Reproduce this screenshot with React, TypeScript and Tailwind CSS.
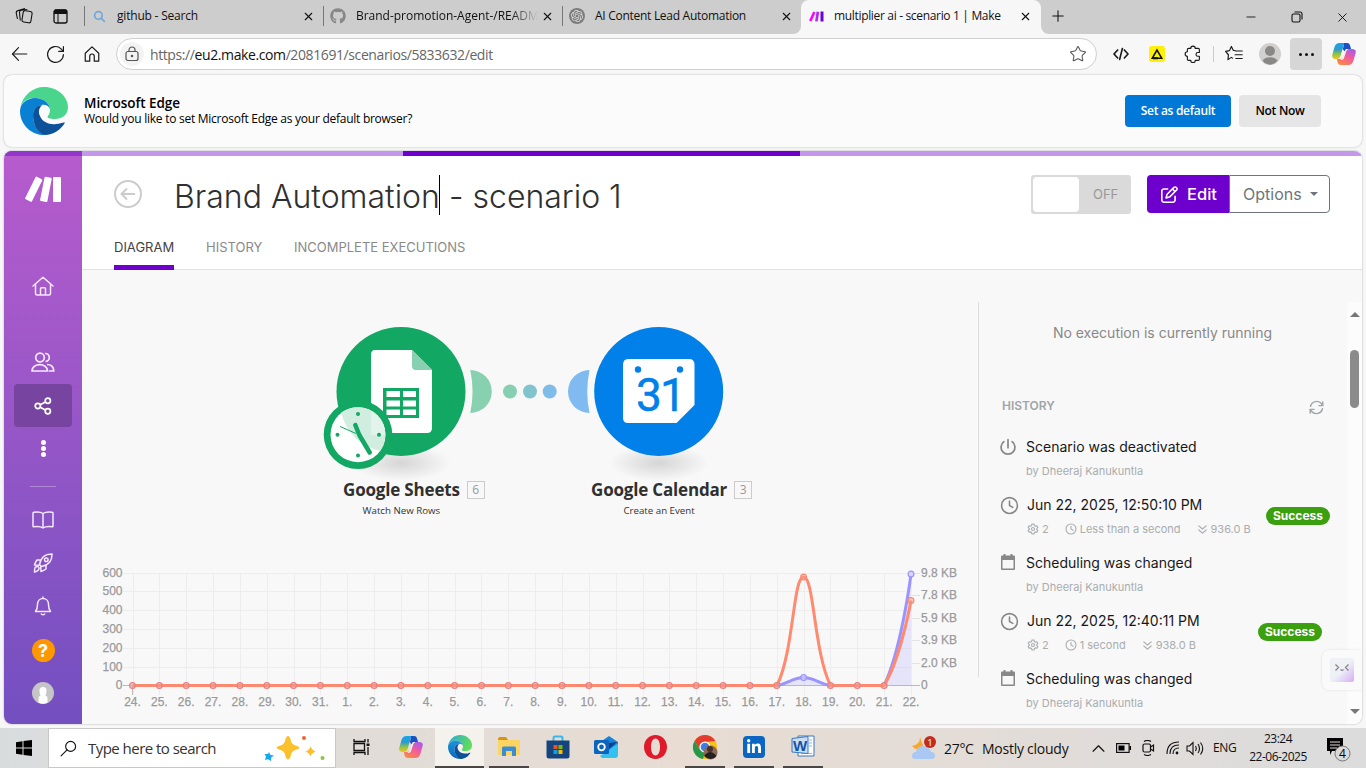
import React from "react";
import { Star, X, Plus, Minus } from "lucide-react";
import { FaGithub, FaLinkedinIn, FaRegPenToSquare } from "react-icons/fa6";
import { SiOpenai } from "react-icons/si";

const days = Array.from({ length: 30 }, (_, i) => (i < 8 ? 24 + i : i - 7));
const px = (i: number) => 50.5 + i * 26.845;

function EdgeLogo({ size, bright }: { size: number; bright?: boolean }) {
  const id = bright ? "eb" : "ea";
  return (
    <svg width={size} height={size} viewBox="0 0 48 48">
      <defs>
        <linearGradient id={id + "g"} x1="0" y1="0" x2="1" y2="0.4">
          <stop offset="0" stopColor={bright ? "#2aa9dc" : "#49d58c"} />
          <stop offset="1" stopColor={bright ? "#5fdc58" : "#49d58c"} />
        </linearGradient>
        <linearGradient id={id + "b"} x1="0" y1="0" x2="0" y2="1">
          <stop offset="0" stopColor={bright ? "#1b95da" : "#0a80d3"} />
          <stop offset="1" stopColor={bright ? "#0b66bd" : "#0a80d3"} />
        </linearGradient>
      </defs>
      <path fill={`url(#${id}g)`} d="M.5 20C3 8 13 0 24 0c14 0 24 10 24 20 0 8-6 12-13 12-5 0-8-1-7.5-2.500C30 27 30 24 30 22c-1-7-8-11-15-11C8 11 3 14 .5 20Z" />
      <path fill={`url(#${id}b)`} d="M0 24C0 16 8 11 15 11c8 0 14.500 5 15 11-1-3-4-4.500-7-4.300C17 18 13 22 13 28c0 10 5 18 13 20C12 49 0 38 0 24Z" />
      <path fill="#0d5299" d="M13 28c0-6 4-10 9-10-3 3-4 7-2 11 2 6 10 9 16 8 4 0 7-2 9-1.500C41 43 33 48 25 48 17 46 13 37 13 28Z" />
    </svg>
  );
}

function Copilot({ id }: { id: string }) {
  return (
    <svg width="24" height="22" viewBox="0 0 24 22">
      <defs>
        <linearGradient id={id + "1"} x1="0" y1="0" x2="0" y2="1">
          <stop offset="0" stopColor="#19a3f0" /><stop offset=".4" stopColor="#2f9bc8" /><stop offset=".7" stopColor="#8fc544" /><stop offset="1" stopColor="#f4c51c" />
        </linearGradient>
        <linearGradient id={id + "2"} x1=".8" y1="0" x2=".2" y2="1">
          <stop offset="0" stopColor="#a85ce8" /><stop offset=".45" stopColor="#ef5ca0" /><stop offset="1" stopColor="#ff8a3c" />
        </linearGradient>
      </defs>
      <path fill={`url(#${id}2)`} d="M17 6h3c3 0 4.500 1.500 3.500 4.500l-2 7c-1 3-2.500 4.500-5 4.500H9c-2 0-3-1-3.500-3L5 16h3c2 0 3-1 3.500-3l1.500-4.500C13.500 7 15 6 17 6Z" />
      <path fill={`url(#${id}1)`} d="M7.500 0H15c-2 0-3 1-3.500 3L8.500 13c-.6 2-1.500 3-3.500 3H4c-3 0-4.500-1.500-3.500-5l2-7C3.300 1.500 5 0 7.500 0Z" />
      <path fill="#1b4fc4" d="M12 0h3c2 0 2.700 1 3.200 3L19 6h-3c-1.800 0-3 1-3.500 2.500L10.800 6 12 2Z" />
      <path fill="#f7f3ef" d="M12.500 8.500 14 6h2.500c-1.300.5-2 1.500-2.500 3l-2 6c-.6 1.500-1.500 2-3 2H8c1.500-.5 2.300-1.500 2.800-3Z" />
    </svg>
  );
}

const Line = ({ d, size = 24, w = 1.5, className = "" }: { d: string[]; size?: number; w?: number; className?: string }) => (
  <svg width={size} height={size} viewBox="0 0 24 24" fill="none" stroke="currentColor" strokeWidth={w} strokeLinecap="round" strokeLinejoin="round" className={className}>
    {d.map((p) => <path key={p} d={p} />)}
  </svg>
);

const clock = ["M12 2a10 10 0 1 0 0 20 10 10 0 0 0 0-20", "M12 6.500V12l4.200 2.300"];

function TabStrip() {
  return (
    <div className="flex h-[34px] shrink-0 bg-[#f7f7f7] text-[12px] tracking-[-0.28px] text-[#111]">
      <div className="flex w-[801px] items-center rounded-br-lg bg-[#cdcdcd] pb-0.5">
        <svg width="18" height="18" viewBox="0 0 18 18" fill="none" stroke="#111" strokeWidth="1.100" className="ml-[15px]">
          <rect x="7.500" y="4" width="9" height="11.500" rx="2" transform="rotate(9 12 10)" />
          <path d="m5.300 13.500-.8-8c-.1-1.200.5-2 1.800-2.200l6-.8M2.500 12 1.300 6.300C1 5 1.600 4 3 3.600l7-2.100" />
        </svg>
        <svg width="15" height="15" viewBox="0 0 15 15" className="ml-5">
          <rect x="1" y="1" width="13" height="13" rx="2" fill="none" stroke="#111" strokeWidth="1.300" />
          <path d="M1 2a1.500 1.500 0 0 1 1.500-1.500h10A1.500 1.500 0 0 1 14 2v3H1Z" fill="#111" /><path d="M5 5v9" stroke="#111" />
        </svg>
        <i className="ml-4 h-5 w-px bg-[#777]" />
        <Line d={["M10 3a7 7 0 1 0 0 14 7 7 0 0 0 0-14", "m15 15 6 6"]} size={13} w={3} className="ml-2 text-[#73a7d8]" />
        <span className="ml-[11px] w-[185px] tracking-[-0.2px] whitespace-nowrap">github - Search</span>
        <X size={13} strokeWidth={2} />
        <i className="ml-[8px] h-5 w-px bg-[#777]" />
        <FaGithub size={16} className="ml-[6px] text-[#888]" />
        <span className="ml-[10px] w-[182px] whitespace-nowrap tracking-[-0.02px] [mask-image:linear-gradient(to_right,#000_85%,transparent)]">Brand-promotion-Agent-/READM</span>
        <X size={13} strokeWidth={2} className="ml-[3px]" />
        <i className="ml-2 h-5 w-px bg-[#777]" />
        <span className="ml-[6px] flex size-4 items-center justify-center rounded-full bg-[#7d7d7d] text-[#ddd]"><SiOpenai size={12} /></span>
        <span className="ml-[10px] w-[184px] whitespace-nowrap">AI Content Lead Automation</span>
        <X size={13} strokeWidth={2} className="ml-px" />
      </div>
      <div className="w-[240px] bg-[#cdcdcd]">
        <div className="flex h-full items-center rounded-t-lg bg-[#f7f7f7] pb-0.5">
          <svg width="15" height="11" viewBox="0 0 15 11" className="ml-2"><path d="M4.200.5 6.500 1.400 2.500 10.500 0 9.500Z" fill="#f0f" /><path d="m7.500.5 2.700.4-1.500 9.600-2.600-.3Z" fill="#b02de9" /><path d="M11.500.5H14.500V10.500h-3Z" fill="#6d00cc" /></svg>
          <span className="ml-[10px] w-[181px] tracking-[-0.33px] whitespace-nowrap">multiplier ai - scenario 1 | Make</span>
          <X size={13} strokeWidth={2} className="ml-[4px]" />
        </div>
      </div>
      <div className="flex flex-1 items-center rounded-bl-lg bg-[#cdcdcd]">
        <Plus size={18} strokeWidth={1.4} className="-mt-0.5 ml-[8px]" />
        <Minus size={14} strokeWidth={1.5} className="ml-[177px]" />
        <svg width="12" height="12" viewBox="0 0 12 12" fill="none" stroke="#111" strokeWidth="1.100" className="ml-[33px]"><rect x="1" y="3" width="8" height="8" rx="1.500" /><path d="M3.500 1H9a2 2 0 0 1 2 2v5.500" /></svg>
        <X size={15} strokeWidth={1.5} className="ml-[32px]" />
      </div>
    </div>
  );
}

function Toolbar() {
  return (
    <div className="flex h-10 shrink-0 items-center text-[#1a1a1a]">
      <Line d={["M21 12H2", "m10 3.500-8 8.500 8 8.500"]} size={18} w={1.5} className="ml-[11px]" />
      <Line d={["M22 12a10 10 0 1 1-3-7.200L22 8", "M22 2v6h-6"]} size={19} w={1.5} className="ml-[17px]" />
      <Line d={["M3 11 12 2.500l9 8.500v10.500h-6V15a3 3 0 0 0-6 0v6.500H3Z"]} size={18} w={1.6} className="ml-[18px]" />
      <div className="ml-[15px] flex h-8 w-[981px] items-center rounded-full border border-[#cfcfcf] bg-white">
        <span className="ml-[3px] flex size-6 items-center justify-center rounded-full bg-[#f3f3f3]">
          <svg width="14" height="16" viewBox="0 0 14 16" fill="none" stroke="#555" strokeWidth="1.200"><rect x="1" y="5.500" width="12" height="9" rx="2" /><path d="M4 5.500V4a3 3 0 0 1 6 0v1.500" /><circle cx="7" cy="10" r=".7" fill="#555" /></svg>
        </span>
        <span className="ml-[6px] flex-1 text-[14px] tracking-[-0.4px] text-[#666]">https://<span className="text-[#111]">eu2.make.com</span>/2081691/scenarios/5833632/edit</span>
        <Star size={18} strokeWidth={1.4} className="mr-[9px] text-[#555]" />
      </div>
      <Line d={["m7 6-5.500 6L7 18", "m17 6 5.500 6-5.500 6", "m14 4-4 16"]} size={16} w={2.5} className="ml-4" />
      <svg width="16" height="16" viewBox="0 0 16 16" className="ml-5"><rect width="16" height="16" rx="2.500" fill="#fff00a" /><path d="M8 4 3.300 12.200H12.700Z" fill="none" stroke="#111" strokeWidth="1.600" /><path d="M4 12.200h5" stroke="#111" strokeWidth="2.200" /></svg>
      <Line d={["M9 4.500a3 3 0 0 1 6 0h4a1.500 1.500 0 0 1 1.500 1.500v4h-2a2.300 2.300 0 0 0 0 5h2v4a1.500 1.500 0 0 1-1.500 1.500h-4a3 3 0 0 1-6 0H6a1.500 1.500 0 0 1-1.500-1.500v-4a3 3 0 0 1 0-6V6A1.500 1.500 0 0 1 6 4.500Z"]} size={18} w={1.5} className="ml-[19px]" />
      <i className="ml-[11px] h-4 w-px bg-[#ccc]" />
      <Line d={["M13.500 7.500 11 7 8.500 2 6 7.500.8 8.500 4.500 13 4 19.500 8.500 16.500 10 17.500", "M14.500 8h8.500M13.500 13h9.500M14.500 18h8.500"]} size={18} w={1.6} className="ml-[11px]" />
      <svg width="22" height="22" viewBox="0 0 22 22" className="ml-[16px]"><circle cx="11" cy="11" r="11" fill="#d2d0ce" /><circle cx="11" cy="8" r="5" fill="#8a8886" /><path d="M3.500 17.500C6 13 16 13 18.500 17.500 15 23 7 23 3.500 17.500Z" fill="#8a8886" /></svg>
      <span className="ml-[9px] flex h-8 w-8 items-center justify-center gap-[3px] rounded bg-[#d6d6d6]">
        <i className="size-[3px] rounded-full bg-[#111]" /><i className="size-[3px] rounded-full bg-[#111]" /><i className="size-[3px] rounded-full bg-[#111]" />
      </span>
      <span className="ml-[10px]"><Copilot id="ca" /></span>
    </div>
  );
}

function Sidebar() {
  return (
    <div className="flex w-[78px] shrink-0 flex-col items-center bg-linear-to-b from-[#b75bcd] to-[#734fc0] text-white">
      <i className="h-[5px] w-full bg-[#9336cb]" />
      <svg width="38" height="28" viewBox="0 0 38 28" fill="#fff" className="mt-5">
        <path d="M11.500 1.200a1 1 0 0 1 1.300-.5l5 2.500a1 1 0 0 1 .4 1.300L8 25.300a1 1 0 0 1-1.300.4l-5-2.500a1 1 0 0 1-.5-1.300Z" />
        <path d="M20.500 1.500a1 1 0 0 1 1.100-.8l5.300 1a1 1 0 0 1 .8 1.200l-4.300 22.300a1 1 0 0 1-1.200.8l-5.300-1a1 1 0 0 1-.8-1.200Z" /><rect x="29" y="1" width="8" height="25" rx="1" />
      </svg>
      <svg width="22" height="20" viewBox="0 0 22 20" fill="none" stroke="#f5e8ff" strokeWidth="1.500" strokeLinecap="round" strokeLinejoin="round" className="mt-[72px]"><path d="M1 10 11 1.200 21 10M3.500 8v9.500q0 1.500 1.500 1.500h12q1.500 0 1.500-1.500V8M8.500 19v-6.500q0-.8.8-.8h3.400q.8 0 .8.800V19" /></svg>
      <svg width="24" height="20" viewBox="0 0 24 20" fill="none" stroke="#f5e8ff" strokeWidth="1.700" strokeLinejoin="round" className="mt-[56px]"><circle cx="9" cy="5.500" r="4.300" /><path d="M14 1.500a4 4 0 1 1 .5 8M1 19c0-8.500 15.500-8.500 15.500 0ZM16 12.500c4 0 6.500 2 6.800 6.500h-5" /></svg>
      <div className="mt-[12px] flex h-[43px] w-[58px] items-center justify-center rounded bg-[#77459f]">
        <svg width="18" height="18" viewBox="0 0 18 18" fill="none" stroke="#fff" strokeWidth="1.700"><circle cx="3.800" cy="9" r="2.600" /><circle cx="13.800" cy="3.800" r="2.600" /><circle cx="13.800" cy="14.200" r="2.600" /><path d="m6.200 7.800 5.200-2.700M6.200 10.200l5.200 2.800" /></svg>
      </div>
      <div className="mt-[13px] flex flex-col gap-[1px]"><i className="size-[5px] rounded-full bg-white" /><i className="size-[5px] rounded-full bg-white" /><i className="size-[5px] rounded-full bg-white" /></div>
      <i className="mt-[29px] h-px w-[26px] bg-white/30" />
      <svg width="22" height="18" viewBox="0 0 22 18" fill="none" stroke="#f5e8ff" strokeWidth="1.500" strokeLinejoin="round" className="mt-[24px]"><path d="M11 2.500C9 1 5 .8 1.800 1.200Q1 1.300 1 2v13q0 .8.800.7C5 15.300 9 15.500 11 17c2-1.500 6-1.700 9.200-1.300q.8.1.8-.7V2q0-.7-.8-.8C17 .8 13 1 11 2.500ZM11 2.500V17" /></svg>
      <svg width="20" height="20" viewBox="0 0 20 20" fill="none" stroke="#f5e8ff" strokeWidth="1.500" strokeLinejoin="round" className="mt-[24px]"><path d="M6.500 11.500C7.500 6 11 .8 19 1c.2 8-5 11.500-10.500 12.500ZM7.800 7H4Q2.500 9 1.500 12l4.800.3M13 12.500V16q-2 1.500-5 2.500l-.3-5M2 14.500Q5.500 12.500 6 15t-4.500 4q0-2.500.5-4.500" /><circle cx="13.300" cy="6.700" r="1.800" /></svg>
      <svg width="18" height="20" viewBox="0 0 18 20" fill="none" stroke="#f5e8ff" strokeWidth="1.500" strokeLinecap="round" strokeLinejoin="round" className="mt-[23px]"><path d="M9 1v1.500M1.500 15.500h15C14.500 13 14.500 11 14.500 8.500c0-8-11-8-11 0 0 2.500 0 4.500-2 7ZM7.300 18q1.700 1.500 3.400 0" /></svg>
      <span className="mt-[23px] flex size-[23px] items-center justify-center rounded-full bg-[#ff9800] font-[Inter] text-[18px] font-bold">?</span>
      <svg width="22" height="22" viewBox="0 0 22 22" className="mt-[20px]"><circle cx="11" cy="11" r="11" fill="#c5c5c5" /><path d="M6.500 20.500V16q0-2 2-2.200Q5.500 5 11 5t2.500 8.800q2 .2 2 2.200v4.500Q11 23 6.500 20.500Z" fill="#fff" /></svg>
    </div>
  );
}

function Header() {
  return (
    <div className="flex h-[114px] shrink-0 flex-col justify-between border-b border-[#e0e0e0] bg-white font-[Inter]">
      <div className="flex items-start pt-[19px] pl-8">
        <svg width="28" height="28" viewBox="0 0 28 28" fill="none" stroke="#ccc" strokeWidth="2" className="mt-[5px]"><circle cx="14" cy="14" r="13" /><path d="M21 14H8M13 8.500 7.500 14l5.500 5.500" /></svg>
        <div className="ml-[32px] flex h-10 w-[857px] items-center whitespace-nowrap text-[32px] font-light text-[#303030]">
          <span className="w-[265px] pt-[3px]">Brand Automation</span><i className="h-10 w-px bg-black" /><span className="ml-[9px] pt-[3px]">- scenario 1</span>
        </div>
        <div className="flex h-[39px] w-[100px] items-center rounded-[3px] bg-[#dadada] p-0.5 text-[13px] text-[#999]">
          <i className="h-[35px] w-[46px] rounded-sm bg-white" /><span className="ml-[14px]">OFF</span>
        </div>
        <div className="ml-4 flex h-[38px]">
          <div className="flex w-[82px] items-center rounded-l-[4px] bg-[#6d00cc] pl-[14px] text-[16.500px] font-medium text-white"><FaRegPenToSquare size={17} /><span className="ml-[9px] pt-px">Edit</span></div>
          <div className="flex w-[101px] items-center rounded-r-[4px] border border-[#6c757d] pl-[13px] text-[16px] text-[#6c757d]">Options<i className="ml-[8px] border-x-[4px] border-t-[4px] border-x-transparent border-t-[#6c757d]" /></div>
        </div>
      </div>
      <div className="ml-8 flex h-[34px] gap-8 text-[13px] whitespace-nowrap text-[#8a8a8a]">
        <div className="-mb-px w-[60px] border-b-[5px] border-[#6d00cc] pt-[3px] text-[#444]">DIAGRAM</div>
        <div className="w-[56px] pt-[3px]">HISTORY</div>
        <div className="pt-[3px]">INCOMPLETE EXECUTIONS</div>
      </div>
    </div>
  );
}

function Diagram() {
  return (
    <svg width="500" height="220" viewBox="310 300 500 220" className="absolute top-[30px] left-[228px]">
      <defs><radialGradient id="sh"><stop offset="0" stopColor="#000" stopOpacity=".14" /><stop offset="1" stopColor="#000" stopOpacity="0" /></radialGradient></defs>
      <ellipse cx="401" cy="463" rx="50" ry="18" fill="url(#sh)" /><ellipse cx="659" cy="463" rx="50" ry="18" fill="url(#sh)" />
      <circle cx="401" cy="391.500" r="64.500" fill="#12a763" /><circle cx="658.700" cy="391.500" r="64.500" fill="#0080e8" />
      <path d="M470.300 370a21.500 21.500 0 0 1 0 43q4.500-21 0-43Z" fill="#88d1b0" /><path d="M589.500 370a21.500 21.500 0 0 0 0 43q-4.500-21 0-43Z" fill="#7fbbf0" />
      <circle cx="510" cy="391.500" r="7" fill="#86cfb2" /><circle cx="530" cy="391.500" r="7" fill="#81c4ce" /><circle cx="549.700" cy="391.500" r="7" fill="#7fbce9" />
      <path d="M375 350h37l20 20v58q0 5-5 5h-52q-4 0-4-5v-73q0-5 4-5Z" fill="#fff" /><path d="m412 350 20 20h-16q-4 0-4-4Z" fill="#88d1b0" />
      <path d="M383 388h36v30h-36Z" fill="#12a763" /><path d="M386.500 391h13.500v6h-13.500ZM403 391h13v6h-13ZM386.500 400.500h13.500v6h-13.500ZM403 400.500h13v6h-13ZM386.500 409.500h13.500v5.500h-13.500ZM403 409.500h13v5.500h-13Z" fill="#fff" />
      <circle cx="358" cy="434.700" r="34.300" fill="#12a763" /><circle cx="358" cy="434.700" r="27.500" fill="#fff" />
      <path d="M341 413a27.500 27.500 0 0 1 39 38q-30-8-39-38Z" fill="#d0ede0" /><path d="M371 411q13 7 14 20v4h-14Z" fill="#f1faf6" opacity=".5" />
      <g fill="#12a763"><circle cx="358" cy="414" r="2" /><circle cx="358" cy="455.500" r="2" /><circle cx="337.500" cy="434.700" r="2" /><circle cx="379" cy="434.700" r="2" /></g>
      <path d="m355.300 425 4 10 10.400 17.500" fill="none" stroke="#12a763" strokeWidth="4.500" strokeLinecap="round" strokeLinejoin="round" /><path d="m340 426.500 16 7" stroke="#12a763" />
      <path d="M628 359h61q5.500 0 5.500 5.500V405l-18 18H628q-5 0-5-5v-53q0-6 5-6Z" fill="#fff" /><circle cx="638" cy="369.500" r="3.200" fill="#0080e8" /><circle cx="680" cy="369.500" r="3.200" fill="#0080e8" />
      <text x="636 660" y="411" fontFamily="Roboto" fontSize="46" stroke="#0080e8" strokeWidth=".5" fill="#0080e8">31</text>
    </svg>
  );
}

function Chart() {
  const ticks: [number, string][] = [[3.5, "600"], [21.5, "500"], [40.5, "400"], [59.5, "300"], [78.5, "200"], [97.5, "100"], [115.5, "0"]];
  const kb: [number, string][] = [[3.5, "9.8 KB"], [25.5, "7.8 KB"], [48.5, "5.9 KB"], [70.5, "3.9 KB"], [93.5, "2.0 KB"], [115.5, "0"]];
  return (
    <svg width="890" height="155" viewBox="0 -10 890 155" className="absolute top-[290px] left-0" fontFamily="Liberation Sans" fontSize="12" fill="#9a9a9a">
      {ticks.map(([y, t]) => <g key={t}><path d={`M41 ${y}H829`} stroke="#ededed" /><text x="40.500" y={y + 3.500} textAnchor="end" stroke="#9a9a9a" strokeWidth=".25">{t}</text></g>)}
      {kb.map(([y, t]) => <g key={t}><path d={`M829 ${y}h9`} stroke="#e3e3e3" /><text x="839" y={y + 3.500} stroke="#9a9a9a" strokeWidth=".25">{t}</text></g>)}
      {days.map((d, i) => <g key={d + "-" + i}><path d={`M${Math.round(px(i)) + 0.5} 3V125`} stroke="#ededed" /><text x={px(i)} y="136" textAnchor="middle" stroke="#9a9a9a" strokeWidth=".25">{d}.</text></g>)}
      <path d="M41 115.500H838M50.500 115v10" stroke="#bbb" fill="none" />
      <path d="M695 115.500C706 114 711 107.500 721.600 107.500S737 114 748.500 115.500ZM802 115.500C820 80 829 4 829 4V115.500Z" fill="#9b94ff" opacity=".2" />
      <path d="M50.500 115.500H695C706 113.800 711 107.500 721.600 107.500S737 113.800 748.500 115.500H802C819.500 79.500 829 4 829 4" fill="none" stroke="#9b94ff" strokeWidth="3" />
      <path d="M50.500 115.500H695C712 80.500 711 7 721.600 7S731.500 80.500 748.500 115.500H802C818.500 89.500 829 30.500 829 30.500" fill="none" stroke="#ff8a70" strokeWidth="3" />
      {days.map((_, i) => <circle key={"r" + i} cx={px(i)} cy={i === 25 ? 7 : i === 29 ? 30.5 : 115.5} r="2.900" fill="#e9a0a0" fillOpacity=".45" stroke={i === 25 || i === 29 ? "#ff8a70" : "#e5817f"} strokeWidth="1.200" />)}
      <circle cx="721.600" cy="107.500" r="2.900" fill="#d8d5ff" fillOpacity=".6" stroke="#9b94ff" strokeWidth="1.200" /><circle cx="829" cy="4" r="2.900" fill="#d8d5ff" stroke="#9b94ff" strokeWidth="1.200" />
    </svg>
  );
}

const PowerIcon = () => <Line d={["M12 2v11", "M6.500 4.800a9.300 9.300 0 1 0 11 0"]} size={18} w={2.3} className="mt-[3px] mr-[9px] -ml-[3px] shrink-0 text-[#888]" />;
const CalIcon = () => <svg width="16" height="17" viewBox="0 0 16 17" className="mt-[3px] mr-[10px] -ml-[2px] shrink-0"><path fillRule="evenodd" d="M3.500 0h2v1.500h5V0h2v1.500H14q1 0 1 1V15q0 1-1 1H2q-1 0-1-1V2.500q0-1 1-1h1.500ZM2.500 6v8.500h11V6Z" fill="#888" /></svg>;

function Note({ icon, title }: { icon: React.ReactNode; title: string }) {
  return (
    <div className="flex h-[58px] items-start">{icon}
      <div className="pt-px"><div className="text-[14px] leading-[22px] text-[#181818]">{title}</div><div className="mt-[3px] text-[11px] leading-5 text-[#a9adb0]">by Dheeraj Kanukuntla</div></div>
    </div>
  );
}

function Run({ title, time, size, wide }: { title: string; time: string; size: string; wide?: boolean }) {
  return (
    <div className="flex h-[58px] items-start">
      <Line d={clock} size={19} w={2} className="mt-[3px] mr-[8px] -ml-[2px] shrink-0 text-[#888]" />
      <div className="pt-px">
        <div className="text-[14px] leading-[22px] text-[#181818]">{title}</div>
        <div className="mt-[3px] flex items-center text-[11px] leading-5 whitespace-nowrap text-[#a9adb0]">
          <Line d={["M10 2h4l.8 3 2 1.200 3-.8 2 3.500-2.200 2.100v2l2.200 2.100-2 3.500-3-.8-2 1.200-.8 3h-4l-.8-3-2-1.200-3 .8-2-3.500L4.400 13v-2L2.200 8.900l2-3.500 3 .8 2-1.200Z", "M12 9a3 3 0 1 0 0 6 3 3 0 0 0 0-6"]} size={12} w={2.2} className="mr-[3px]" />2
          <Line d={clock} size={12} w={2.2} className="mr-[3px] ml-[16px]" />{time}
          <Line d={["m4 4 8 7 8-7", "m4 13 8 7 8-7"]} size={11} w={2.5} className="mr-[3px] ml-[16px]" />{size}
        </div>
      </div>
      <span className={wide ? "mt-[14px] ml-auto flex h-[18px] w-16 items-center justify-center rounded-full bg-[#3ba010] text-[12px] font-bold text-white" : "mt-[14px] mr-2 ml-auto flex h-[18px] w-16 items-center justify-center rounded-full bg-[#3ba010] text-[12px] font-bold text-white"}>Success</span>
    </div>
  );
}

function HistoryPanel() {
  return (
    <div className="mt-[32px] flex h-[422px] w-[384px] font-[Inter]">
      <div className="h-[375px] w-[369px] border-l border-[#ddd]">
        <div className="pt-[21px] pr-px text-center text-[14px] leading-5 text-[#888]">No execution is currently running</div>
        <div className="mt-[53px] flex items-center justify-between pr-[23px] pl-[23px] text-[12px] leading-5 font-semibold text-[#a0a5a8]">HISTORY
          <Line d={["M2.500 10A10 10 0 0 1 20 6l2 2.500", "M22 3v6h-6", "M21.500 14A10 10 0 0 1 4 18l-2-2.500", "M2 21v-6h6"]} size={15} w={2.3} className="mt-0.5" />
        </div>
        <div className="mt-[19px] pr-[17px] pl-[23px]">
          <Note icon={<PowerIcon />} title="Scenario was deactivated" />
          <Run title="Jun 22, 2025, 12:50:10 PM" time="Less than a second" size="936.0 B" wide />
          <Note icon={<CalIcon />} title="Scheduling was changed" />
          <Run title="Jun 22, 2025, 12:40:11 PM" time="1 second" size="938.0 B" />
          <Note icon={<CalIcon />} title="Scheduling was changed" />
        </div>
      </div>
      <div className="flex w-[15px] flex-col items-center justify-between bg-[#fcfcfc] pt-[10px] pb-[10px]">
        <div className="flex flex-col items-center"><i className="border-x-[5px] border-b-[5px] border-x-transparent border-b-[#777]" /><i className="mt-[33px] h-[58px] w-[9px] rounded-full bg-[#8b8b8b]" /></div>
        <i className="border-x-[5px] border-t-[5px] border-x-transparent border-t-[#777]" />
      </div>
    </div>
  );
}

function NodeLabel({ name, sub, n, className }: { name: string; sub: string; n: string; className: string }) {
  return (
    <div className={className}>
      <div className="flex items-center whitespace-nowrap"><span className="text-[17px] leading-5 font-bold tracking-[-0.18px] text-[#303030]">{name}</span><span className="ml-[7px] flex h-[18px] w-[18px] items-center justify-center border border-[#ccc] text-[12px] text-[#999]">{n}</span></div>
      <div className="mt-[3px] mr-[25px] text-center text-[9.700px] leading-4 text-[#333]">{sub}</div>
    </div>
  );
}

function TaskIcon({ children, line, active }: { children: React.ReactNode; line?: boolean; active?: boolean }) {
  return (
    <div className={active ? "flex h-10 w-[49px] flex-col items-center bg-[#f5f1ed]" : "flex h-10 w-[49px] flex-col items-center"}>
      <div className="flex h-[38px] items-center">{children}</div>
      {line && <i className={active ? "h-0.5 w-full bg-[#4a4646]" : "h-0.5 w-10 bg-[#4a4646]"} />}
    </div>
  );
}

function Taskbar() {
  return (
    <div className="mt-1 flex h-10 shrink-0 items-center bg-linear-to-r from-[#d9dcdd] via-[#e8dcd3] to-[#dcdcdd] text-[#111]">
      <div className="flex w-[48px] justify-center"><svg width="16" height="16" viewBox="0 0 16 16"><path d="M0 2.300 6.500 1.300V7.500H0ZM7.500 1.100 16 0V7.500H7.500ZM0 8.500H6.500V14.700L0 13.700ZM7.500 8.500H16V16L7.500 14.900Z" /></svg></div>
      <div className="mr-px flex h-10 w-[288px] items-center border border-[#c8c8c8] bg-white">
        <Line d={["M15 2a7 7 0 1 0 0 14 7 7 0 0 0 0-14", "m10 14-8.500 8.500"]} size={17} w={1.6} className="ml-[11px]" />
        <span className="ml-[11px] w-[176px] text-[15px] tracking-[-0.53px] whitespace-nowrap text-[#333]">Type here to search</span>
        <svg width="64" height="30" viewBox="0 0 64 30"><path d="M24 3q2 0 3 5 1 4 6 5 5 1.500 0 3.500-5 1-6 5-1 5-3 5t-3-5q-1-4-6-5-5-2 0-3.500 5-1 6-5 1-5 3-5Z" fill="#fbc02d" /><path d="M46.500 13q1.200 4 5 5.500-3.800 1.500-5 5-1-3.500-5-5 4-1.500 5-5Z" fill="#fbc02d" /><path d="M5 19l1.500 3 3.500.5-2.700 2L7 28l-3-1.700L1 27l1-3.500L.5 21 4 21Z" fill="#18a8f0" /><circle cx="40" cy="5" r="2" fill="#f2642d" /><circle cx="58.500" cy="25" r="2" fill="#8bc34a" /></svg>
      </div>
      <TaskIcon><svg width="17" height="16" viewBox="0 0 17 16" fill="none" stroke="#111" strokeWidth="1.300"><path d="M1 0v2.500h11V0M1 16v-2.500h11V16M1 4.500h10.500v7H1ZM15 0v3.500M15 8v8" /><path d="M13.500 4.500h3V7h-3Z" fill="#111" stroke="none" /></svg></TaskIcon>
      <TaskIcon><Copilot id="cb" /></TaskIcon>
      <TaskIcon line active><EdgeLogo size={24} bright /></TaskIcon>
      <TaskIcon line><svg width="22" height="20" viewBox="0 0 22 20"><path d="M0 2q0-2 2-2h6l2 3H0Z" fill="#d99412" /><path d="M0 3h22v15H0Z" fill="#fcd462" /><path d="M4 11q0-1.500 1.500-1.500h11Q18 9.500 18 11v8h-4v-5H8v5H4Z" fill="#3c8cd2" /></svg></TaskIcon>
      <TaskIcon><svg width="24" height="24" viewBox="0 0 24 24"><path d="M7.500 6V3q0-1.500 1.500-1.500h6q1.500 0 1.500 1.500v3" fill="none" stroke="#39b7ec" strokeWidth="2" /><path d="M.5 5.500h23V21q0 2.500-2.500 2.500H3Q.5 23.500.5 21Z" fill="#15457c" /><path d="M7.500 10H11.500v4h-4Z" fill="#f25022" /><path d="M12.500 10h4v4h-4Z" fill="#7fba00" /><path d="M7.500 15h4v4h-4Z" fill="#00a4ef" /><path d="M12.500 15h4v4h-4Z" fill="#ffb900" /></svg></TaskIcon>
      <TaskIcon><svg width="25" height="24" viewBox="0 0 25 24"><path d="M5 8 15 1l9 6v10H5Z" fill="#1682d8" /><path d="m8 9 15-2-9 8Z" fill="#133c88" /><path d="m6 21 18-12.500V20q0 3-3 3H8Z" fill="#35c1ef" /><rect y="5" width="15" height="14" rx="1.500" fill="#0b64bd" /><circle cx="7.500" cy="12" r="3.300" fill="none" stroke="#fff" strokeWidth="1.800" /></svg></TaskIcon>
      <TaskIcon><svg width="23" height="24" viewBox="0 0 23 24"><path fillRule="evenodd" d="M11.500 0C18 0 23 5 23 12s-5 12-11.500 12S0 19 0 12 5 0 11.500 0Zm0 3.500c-3 0-4.500 4-4.500 8.500s1.500 8.500 4.500 8.500S16 16.500 16 12s-1.500-8.500-4.500-8.500Z" fill="#e01a2b" /></svg></TaskIcon>
      <TaskIcon line><svg width="26" height="25" viewBox="0 0 26 25"><circle cx="13" cy="12" r="12" fill="#fbc116" /><path d="M2.600 6A12 12 0 0 1 23.400 6L13 7a5.500 5.500 0 0 0-5 8Z" fill="#e33b2e" /><path d="M2.600 6 8 15l5 2-2 7A12 12 0 0 1 2.600 6Z" fill="#279847" /><circle cx="13" cy="12" r="5.500" fill="#fff" /><circle cx="13" cy="12" r="4.300" fill="#3d7de5" /><circle cx="18.500" cy="17.500" r="7" fill="#8c6a58" /><circle cx="18" cy="14" r="3" fill="#49312a" /><path d="M12 21q6-8 12.500 0-5.500 6-12.500 0Z" fill="#232020" /></svg></TaskIcon>
      <TaskIcon line><span className="flex h-[22px] w-[22px] items-center justify-center rounded-sm bg-[#0a66c2] text-white"><FaLinkedinIn size={16} /></span></TaskIcon>
      <TaskIcon line><svg width="24" height="24" viewBox="0 0 24 24"><path d="M7 1h16v20H7Z" fill="#fff" stroke="#3a77bd" /><path d="M18 5h3M18 8h3M18 11h3M10 18.500h11" stroke="#8fb5e0" /><path d="M1 3.500 17 1.500v17L1 17Z" fill="#c9def5" stroke="#3a77bd" /><text x="9" y="15.500" textAnchor="middle" fontSize="15" fontWeight="bold" fontFamily="Liberation Sans" fill="#1751a3">W</text></svg></TaskIcon>
      <svg width="28" height="26" viewBox="0 0 28 26" className="ml-[84px]"><path d="M9 2q0 8-8 9 5 6 12 2Z" fill="#f9a72b" /><path d="M5 24q-5 0-4-4 1-3 4-3 1-6 7-6t8 6q4 0 4 4 0 3-4 3Z" fill="#a9c8f3" /><circle cx="19" cy="7" r="6" fill="#c42b1c" /><text x="19" y="10.500" textAnchor="middle" fontSize="9.500" fill="#fff">1</text></svg>
      <span className="ml-[5px] w-[38px] text-[14px] tracking-[-0.3px]">27°C</span>
      <span className="w-[110px] text-[14px] tracking-[-0.25px] whitespace-nowrap">Mostly cloudy</span>
      <Line d={["m2 17 10-10 10 10"]} size={13} w={2.2} />
      <svg width="16" height="10" viewBox="0 0 16 10" className="ml-[11px]"><rect x=".6" y=".6" width="12.500" height="8.800" fill="none" stroke="#111" strokeWidth="1.200" /><path d="M2.500 2.500h6v5h-6ZM13.500 3h1.500v4h-1.500Z" /></svg>
      <svg width="13" height="16" viewBox="0 0 13 16" fill="none" stroke="#111" strokeWidth="1.200" className="ml-[10px]"><rect x="1" y="4" width="7.500" height="8" rx="1.500" /><path d="m8.500 7 3-2v6l-3-2M2 1.500Q5.500-.5 9 1.500M2 14.500q3.500 2 7 0" /></svg>
      <svg width="14" height="14" viewBox="0 0 14 14" fill="none" stroke="#111" strokeWidth="1.100" className="ml-[11px]"><path d="M1 13Q1 1 13 1M4 13Q4 4 13 4M7 13Q7 7 13 7" /><circle cx="11" cy="12" r="1.400" fill="#111" stroke="none" /></svg>
      <svg width="18" height="15" viewBox="0 0 18 15" fill="none" stroke="#111" strokeWidth="1.100" className="ml-[6px]"><path d="M1 5h2.500L7 1.500v12L3.500 10H1ZM9.500 5q1.500 2.500 0 5M12 3q3 4.500 0 9M14.500 1.500q4.500 6 0 12" /></svg>
      <span className="ml-[9px] w-[26px] text-[12px] tracking-[-0.4px]">ENG</span>
      <div className="ml-[2px] w-[74px] text-center text-[12px] leading-[18px] tracking-[-0.5px] whitespace-nowrap">23:24<br />22-06-2025</div>
      <svg width="26" height="26" viewBox="0 0 26 26" className="mt-1 ml-[11px]"><path d="M1 1h16v13H6l-2 4v-4H1Z" /><path d="M4 5h10M4 8h10M4 11h7" stroke="#e5dfda" /><circle cx="16.500" cy="16.500" r="7.500" fill="#d9d9d9" stroke="#777" /><text x="16.500" y="21" fontSize="12" textAnchor="middle">4</text></svg>
    </div>
  );
}

export default function App() {
  return (
    <div className="flex h-[768px] w-[1366px] flex-col overflow-hidden bg-[#f7f7f7] font-['Open_Sans',sans-serif]">
      <TabStrip />
      <Toolbar />
      <div className="mx-1 mt-px flex h-[72px] shrink-0 items-center rounded-lg bg-[#fbfbfb] pl-4 text-[12px] text-black shadow-[0_0_2px_rgba(0,0,0,0.3)]">
        <EdgeLogo size={48} />
        <div className="ml-4 flex-1 leading-4"><div className="text-[13.500px] font-semibold tracking-[-0.05px]">Microsoft Edge</div><div className="tracking-[-0.26px]">Would you like to set Microsoft Edge as your default browser?</div></div>
        <button className="h-8 w-[106px] rounded bg-[#0078d7] font-semibold tracking-[-0.3px] text-white">Set as default</button>
        <button className="mr-[41px] ml-2 h-8 w-[82px] rounded bg-[#e5e5e5] font-semibold tracking-[-0.3px]">Not Now</button>
      </div>
      <div className="relative mx-1 mt-1 flex h-[573px] shrink-0 overflow-hidden rounded-lg bg-[#f8f8f8] shadow-[0_0_2px_rgba(0,0,0,0.35)]">
        <Sidebar />
        <div className="flex flex-1 flex-col">
          <div className="flex h-[5px] shrink-0 bg-[#c497ec]"><i className="ml-[321px] w-[397px] bg-[#6d00cc]" /></div>
          <Header />
          <div className="flex flex-1">
            <div className="relative w-[896px]">
              <Diagram />
              <NodeLabel name="Google Sheets" n="6" sub="Watch New Rows" className="absolute top-[210px] left-[261px]" />
              <NodeLabel name="Google Calendar" n="3" sub="Create an Event" className="absolute top-[210px] left-[509px]" />
              <Chart />
            </div>
            <HistoryPanel />
          </div>
        </div>
        <div className="absolute right-0 bottom-[34px] flex h-10 w-10 items-start justify-center rounded-l-lg bg-[#fafafa]/90 pt-2 shadow-[0_0_3px_rgba(0,0,0,0.1)]">
          <svg width="24" height="24" viewBox="0 0 24 24"><defs><linearGradient id="bot" x1="0" y1="0" x2="1" y2="1"><stop offset=".5" stopColor="#eef1f6" /><stop offset="1" stopColor="#d3aef5" /></linearGradient></defs><rect width="24" height="24" rx="2" fill="url(#bot)" /><path d="m5.500 6.500 3 3-3 3M18.500 6.500l-3 3 3 3M10.500 11.500q1.500 1.500 3 0" fill="none" stroke="#888" strokeWidth="1.400" /></svg>
        </div>
      </div>
      <Taskbar />
    </div>
  );
}
